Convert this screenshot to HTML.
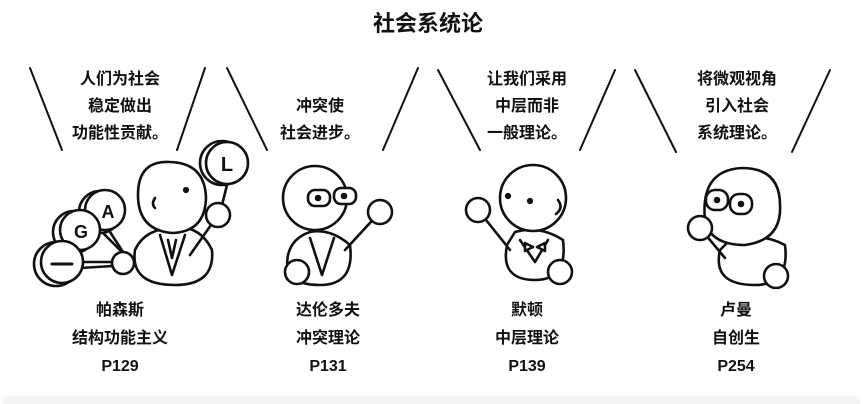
<!DOCTYPE html>
<html><head><meta charset="utf-8"><style>
html,body{margin:0;padding:0;background:#fff;width:863px;height:404px;overflow:hidden}
svg{position:absolute;left:0;top:0}
text{font-family:"Liberation Sans","Noto Sans CJK SC",sans-serif;fill:#111}
</style></head><body>
<svg width="863" height="404" viewBox="0 0 863 404">
<rect x="3" y="396" width="857" height="20" rx="6" fill="#f3f4f6"/>
<text x="428" y="31" font-size="22" font-weight="bold" text-anchor="middle">社会系统论</text>
<g stroke="#111" stroke-width="2" fill="none" stroke-linecap="round">
<line x1="30" y1="68" x2="62" y2="150"/><line x1="205" y1="68" x2="177" y2="150"/>
<line x1="227" y1="68" x2="267" y2="150"/><line x1="418" y1="68" x2="383" y2="150"/>
<line x1="438" y1="70" x2="480" y2="150"/><line x1="615" y1="70" x2="580" y2="150"/>
<line x1="635" y1="70" x2="676" y2="152"/><line x1="830" y1="70" x2="792" y2="152"/>
</g>
<g font-size="16" text-anchor="middle" font-weight="bold">
<text x="120" y="84">人们为社会</text><text x="120" y="111">稳定做出</text><text x="120" y="138">功能性贡献。</text>
<text x="320" y="111">冲突使</text><text x="320" y="138">社会进步。</text>
<text x="527" y="84">让我们采用</text><text x="527" y="111">中层而非</text><text x="527" y="138">一般理论。</text>
<text x="737" y="84">将微观视角</text><text x="737" y="111">引入社会</text><text x="737" y="138">系统理论。</text>
<text x="120" y="315">帕森斯</text><text x="120" y="343">结构功能主义</text><text x="120" y="371">P129</text>
<text x="328" y="315">达伦多夫</text><text x="328" y="343">冲突理论</text><text x="328" y="371">P131</text>
<text x="527" y="315">默顿</text><text x="527" y="343">中层理论</text><text x="527" y="371">P139</text>
<text x="736" y="315">卢曼</text><text x="736" y="343">自创生</text><text x="736" y="371">P254</text>
</g>
<g stroke="#111" stroke-width="2.6" fill="#fff" stroke-linecap="round" stroke-linejoin="round">
<!-- Parsons -->
<path d="M135 250 Q130 285 175 285 Q215 285 212 250 Q200 225 175 228 Q145 228 135 250Z"/>
<path d="M160 235 L172 275 L185 235"/><path d="M168 240 l4 18 l4 -18"/>
<line x1="218" y1="215" x2="190" y2="255"/>
<line x1="227" y1="185" x2="222" y2="205"/>
<line x1="100" y1="230" x2="125" y2="255"/><line x1="110" y1="232" x2="125" y2="255"/>
<line x1="80" y1="262" x2="113" y2="262"/><line x1="80" y1="268" x2="113" y2="266"/>
<circle cx="222" cy="163" r="22"/><circle cx="227" cy="163" r="21"/>
<text x="227" y="171" font-size="20" stroke="none" text-anchor="middle" font-weight="bold">L</text>
<circle cx="100" cy="212" r="21"/><circle cx="105" cy="210" r="20"/>
<text x="108" y="218" font-size="18" stroke="none" text-anchor="middle" font-weight="bold">A</text>
<circle cx="74" cy="232" r="21"/><circle cx="80" cy="230" r="20"/>
<text x="81" y="238" font-size="18" stroke="none" text-anchor="middle" font-weight="bold">G</text>
<circle cx="56" cy="264" r="22"/><circle cx="62" cy="262" r="21"/>
<line x1="52" y1="264" x2="72" y2="264" stroke-width="3"/>
<path d="M138 195 Q138 160 170 162 Q205 163 206 198 Q205 232 172 233 Q138 230 138 195Z"/>
<circle cx="186" cy="190" r="1.8" fill="#111"/><path d="M155 198 q-4 6 0 10" fill="none"/>
<circle cx="218" cy="215" r="12"/><circle cx="123" cy="263" r="11"/>
<!-- Dahrendorf -->
<path d="M288 255 Q282 285 320 285 Q355 285 350 245 Q330 228 310 232 Q292 238 288 255Z"/>
<path d="M310 238 L322 275 L334 238"/>
<line x1="380" y1="212" x2="345" y2="250"/>
<circle cx="315" cy="198" r="32"/>
<rect x="308" y="190" width="22" height="16" rx="7"/><rect x="334" y="188" width="22" height="16" rx="7"/>
<circle cx="318" cy="198" r="2" fill="#111"/><circle cx="344" cy="196" r="2" fill="#111"/>
<circle cx="380" cy="212" r="12"/><circle cx="297" cy="272" r="12"/>
<!-- Merton -->
<path d="M507 245 Q500 280 535 280 Q568 280 563 240 Q540 225 515 232Z"/>
<path d="M520 240 L535 262 L548 240"/><path d="M525 243 l8 4 l-8 4z M545 243 l-8 4 l8 4z"/>
<line x1="478" y1="210" x2="510" y2="250"/>
<circle cx="533" cy="198" r="33"/>
<circle cx="508" cy="196" r="1.8" fill="#111"/><circle cx="530" cy="201" r="1.8" fill="#111"/>
<path d="M558 200 q6 8 -2 14" fill="none"/>
<circle cx="478" cy="210" r="12"/><circle cx="560" cy="272" r="12"/>
<!-- Luhmann -->
<path d="M720 250 Q712 285 755 285 Q790 285 785 245 Q760 232 730 240Z"/>
<line x1="700" y1="228" x2="725" y2="258"/>
<path d="M705 220 Q700 170 742 168 Q780 168 780 205 Q782 240 745 245 Q710 245 705 220Z"/>
<rect x="706" y="190" width="22" height="20" rx="9"/><rect x="730" y="194" width="22" height="20" rx="9"/>
<circle cx="717" cy="200" r="2" fill="#111"/><circle cx="741" cy="204" r="2" fill="#111"/>
<circle cx="700" cy="228" r="12"/><circle cx="776" cy="276" r="12"/>
</g>
</svg>
</body></html>
